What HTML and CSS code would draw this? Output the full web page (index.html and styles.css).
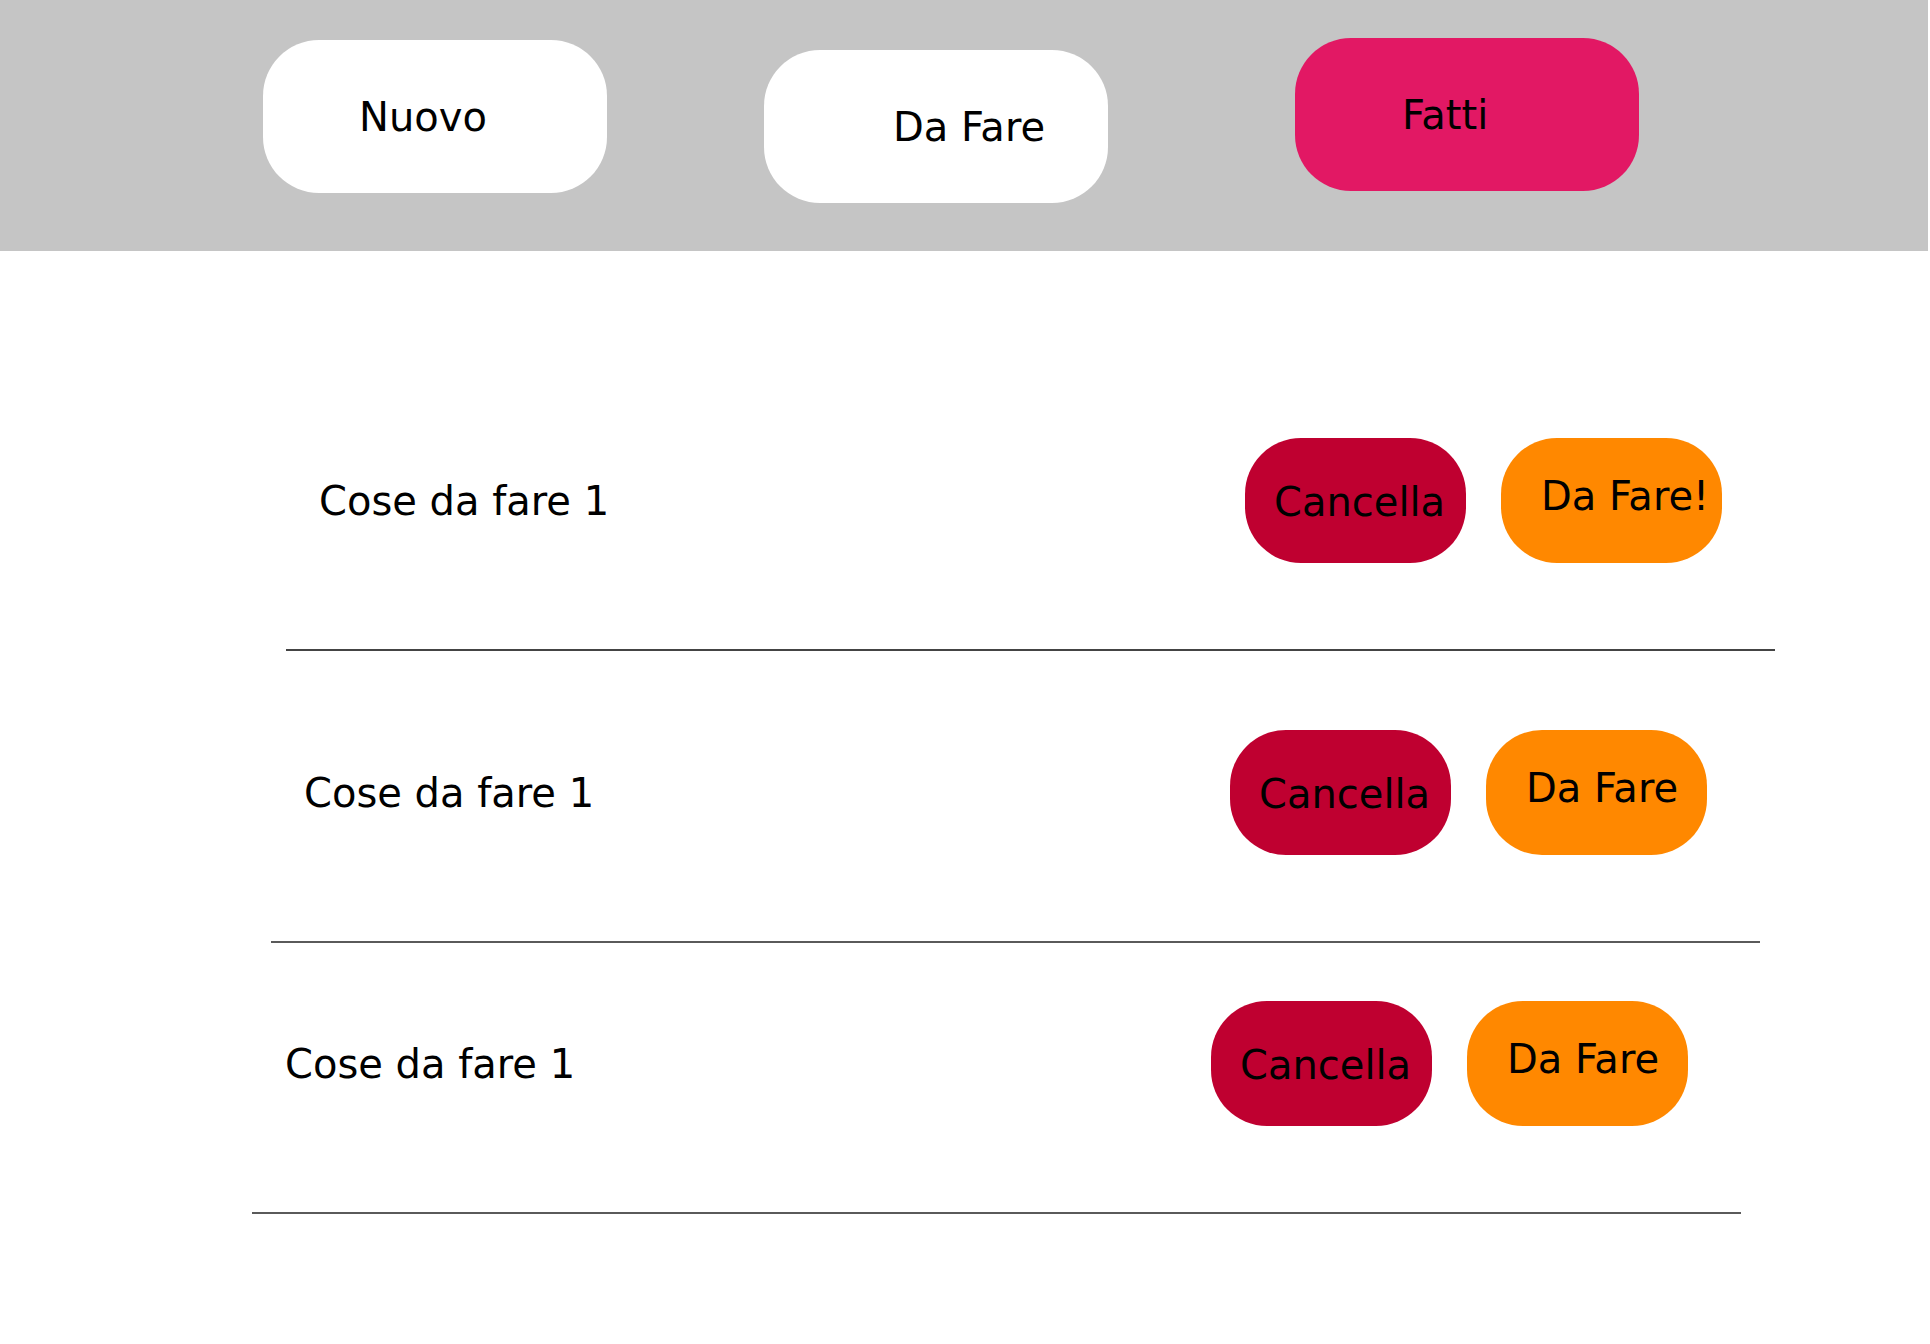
FILE: index.html
```html
<!DOCTYPE html>
<html lang="it">
<head>
<meta charset="utf-8">
<title>Cose da fare</title>
<link rel="stylesheet" href="styles.css">
</head>
<body>
<header class="topbar">
  <div class="tab tab-nuovo">Nuovo</div>
  <div class="tab tab-dafare">Da Fare</div>
  <div class="tab tab-fatti">Fatti</div>
</header>
<main class="list">
  <section class="row row-1">
    <div class="row-main">
      <div class="task-text">Cose da fare 1</div>
      <div class="btn btn-cancel">Cancella</div>
      <div class="btn btn-todo">Da Fare!</div>
    </div>
    <div class="row-line line-dark"></div>
  </section>
  <section class="row row-2">
    <div class="row-main">
      <div class="task-text">Cose da fare 1</div>
      <div class="btn btn-cancel">Cancella</div>
      <div class="btn btn-todo">Da Fare</div>
    </div>
    <div class="row-line"></div>
  </section>
  <section class="row row-3">
    <div class="row-main">
      <div class="task-text">Cose da fare 1</div>
      <div class="btn btn-cancel">Cancella</div>
      <div class="btn btn-todo">Da Fare</div>
    </div>
    <div class="row-line"></div>
  </section>
</main>
</body>
</html>
```

FILE: styles.css
```css
html, body {
  margin: 0;
  padding: 0;
  background: #ffffff;
}

body {
  font-family: "DejaVu Sans", "Liberation Sans", sans-serif;
  font-size: 40px;
  line-height: 47px;
  color: #000000;
}

.topbar {
  width: 1928px;
  height: 251px;
  background: #c5c5c5;
  display: flex;
  align-items: flex-start;
  padding-left: 263px;
  box-sizing: border-box;
}

.tab {
  width: 344px;
  height: 153px;
  border-radius: 56px;
  box-sizing: border-box;
  padding-top: 54px;
  background: #ffffff;
  white-space: nowrap;
}

.tab-nuovo {
  margin-top: 40px;
  padding-left: 96px;
}

.tab-dafare {
  margin-top: 50px;
  margin-left: 157px;
  padding-left: 129px;
}

.tab-fatti {
  margin-top: 38px;
  margin-left: 187px;
  padding-left: 107px;
  background: #e21864;
}

.list {
  padding-top: 187px;
}

.row {
  width: 1489px;
}

.row-1 {
  margin-left: 286px;
}

.row-2 {
  margin-left: 271px;
  margin-top: 79px;
}

.row-3 {
  margin-left: 252px;
  margin-top: 58px;
}

.row-main {
  display: flex;
  align-items: flex-start;
  height: 125px;
  padding-left: 33px;
}

.task-text {
  width: 926px;
  margin-top: 40px;
  white-space: nowrap;
}

.btn {
  width: 221px;
  height: 125px;
  border-radius: 56px;
  box-sizing: border-box;
  white-space: nowrap;
}

.btn-cancel {
  background: #bf0030;
  padding-top: 41px;
  padding-left: 29px;
}

.btn-todo {
  background: #ff8800;
  margin-left: 35px;
  padding-top: 35px;
  padding-left: 40px;
}

.row-line {
  margin-top: 86px;
  height: 2px;
  background: #5a5a5a;
}

.line-dark {
  background: #444444;
}
```
